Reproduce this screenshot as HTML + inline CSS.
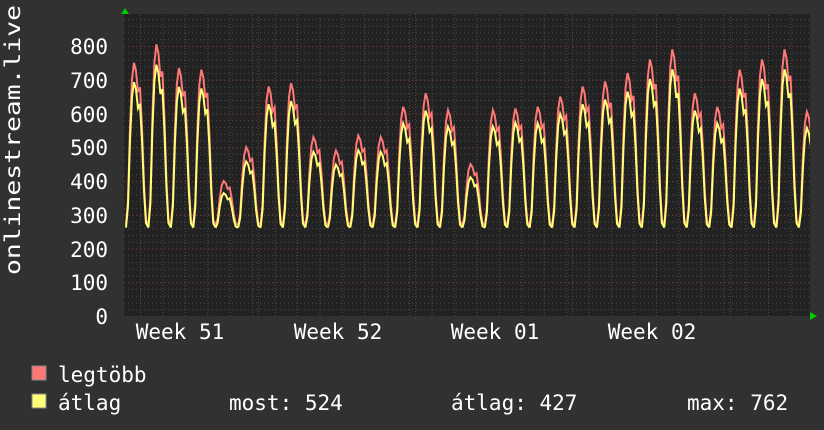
<!DOCTYPE html>
<html><head><meta charset="utf-8"><style>
html,body{margin:0;padding:0;background:#313131;width:824px;height:430px;overflow:hidden}
svg{display:block}
text{font-family:"DejaVu Sans Mono","Liberation Mono",monospace;fill:#fff}
</style></head><body>
<svg width="824" height="430" xmlns="http://www.w3.org/2000/svg">
<defs>
<pattern id="hm" patternUnits="userSpaceOnUse" x="0" y="316" width="4" height="6.75">
<rect x="0" y="0" width="1" height="1" fill="#4c4c4c"/></pattern>
<pattern id="hM" patternUnits="userSpaceOnUse" x="0" y="316" width="4" height="33.75">
<rect x="0" y="0" width="1.5" height="1" fill="#6a3a3a"/></pattern>
<pattern id="vm" patternUnits="userSpaceOnUse" x="140" y="0" width="22.43" height="3">
<rect x="0" y="0" width="1" height="1" fill="#4c4c4c"/></pattern>
<clipPath id="pc"><rect x="124" y="14" width="686" height="302"/></clipPath>
<path id="day" d="M0,0 L2,-0.15 L4,-0.6 L6,-0.9 L8,-1 L10,-0.95 L12,-0.82 L14,-0.85 L16,-0.6 L18,-0.25 L20,-0.03 L22.43,0" fill="none" vector-effect="non-scaling-stroke"/>
</defs>
<rect x="124" y="14" width="686" height="302" fill="#222"/>
<rect x="124" y="14" width="686" height="302" fill="url(#hm)"/>
<rect x="124" y="14" width="686" height="302" fill="url(#vm)"/>
<rect x="124" y="14" width="686" height="302" fill="url(#hM)"/>
<g stroke="#6a3a3a" stroke-dasharray="1,2">
<line x1="258.5" x2="258.5" y1="14" y2="320"/><line x1="415.5" x2="415.5" y1="14" y2="320"/>
<line x1="572.5" x2="572.5" y1="14" y2="320"/><line x1="730.5" x2="730.5" y1="14" y2="320"/>
</g>
<g clip-path="url(#pc)" stroke-width="2">
<g stroke="#f77">
<use href="#day" transform="translate(126,224.9) scale(1,162)"/>
<use href="#day" transform="translate(148.4,224.9) scale(1,180.6)"/>
<use href="#day" transform="translate(170.9,224.9) scale(1,156.9)"/>
<use href="#day" transform="translate(193.3,224.9) scale(1,155.3)"/>
<use href="#day" transform="translate(215.7,224.9) scale(1,43.9)"/>
<use href="#day" transform="translate(238.2,224.9) scale(1,77.6)"/>
<use href="#day" transform="translate(260.6,224.9) scale(1,138.4)"/>
<use href="#day" transform="translate(283,224.9) scale(1,141.8)"/>
<use href="#day" transform="translate(305.4,224.9) scale(1,87.8)"/>
<use href="#day" transform="translate(327.9,224.9) scale(1,74.3)"/>
<use href="#day" transform="translate(350.3,224.9) scale(1,89.4)"/>
<use href="#day" transform="translate(372.7,224.9) scale(1,87.8)"/>
<use href="#day" transform="translate(395.2,224.9) scale(1,118.1)"/>
<use href="#day" transform="translate(417.6,224.9) scale(1,131.6)"/>
<use href="#day" transform="translate(440,224.9) scale(1,114.8)"/>
<use href="#day" transform="translate(462.5,224.9) scale(1,60.8)"/>
<use href="#day" transform="translate(484.9,224.9) scale(1,114.8)"/>
<use href="#day" transform="translate(507.3,224.9) scale(1,116.4)"/>
<use href="#day" transform="translate(529.7,224.9) scale(1,118.1)"/>
<use href="#day" transform="translate(552.2,224.9) scale(1,128.3)"/>
<use href="#day" transform="translate(574.6,224.9) scale(1,138.4)"/>
<use href="#day" transform="translate(597,224.9) scale(1,143.4)"/>
<use href="#day" transform="translate(619.5,224.9) scale(1,151.9)"/>
<use href="#day" transform="translate(641.9,224.9) scale(1,165.4)"/>
<use href="#day" transform="translate(664.3,224.9) scale(1,175.5)"/>
<use href="#day" transform="translate(686.8,224.9) scale(1,131.6)"/>
<use href="#day" transform="translate(709.2,224.9) scale(1,118.1)"/>
<use href="#day" transform="translate(731.6,224.9) scale(1,155.3)"/>
<use href="#day" transform="translate(754,224.9) scale(1,165.4)"/>
<use href="#day" transform="translate(776.5,224.9) scale(1,175.5)"/>
<use href="#day" transform="translate(798.9,224.9) scale(1,113.1)"/>
</g>
<g stroke="#ff7">
<use href="#day" transform="translate(126,227.6) scale(1,145.5)"/>
<use href="#day" transform="translate(148.4,227.6) scale(1,162.9)"/>
<use href="#day" transform="translate(170.9,227.6) scale(1,140.7)"/>
<use href="#day" transform="translate(193.3,227.6) scale(1,139.1)"/>
<use href="#day" transform="translate(215.7,227.6) scale(1,34.4)"/>
<use href="#day" transform="translate(238.2,227.6) scale(1,66.2)"/>
<use href="#day" transform="translate(260.6,227.6) scale(1,123.3)"/>
<use href="#day" transform="translate(283,227.6) scale(1,126.4)"/>
<use href="#day" transform="translate(305.4,227.6) scale(1,75.7)"/>
<use href="#day" transform="translate(327.9,227.6) scale(1,63)"/>
<use href="#day" transform="translate(350.3,227.6) scale(1,77.3)"/>
<use href="#day" transform="translate(372.7,227.6) scale(1,75.7)"/>
<use href="#day" transform="translate(395.2,227.6) scale(1,104.2)"/>
<use href="#day" transform="translate(417.6,227.6) scale(1,116.9)"/>
<use href="#day" transform="translate(440,227.6) scale(1,101)"/>
<use href="#day" transform="translate(462.5,227.6) scale(1,50.3)"/>
<use href="#day" transform="translate(484.9,227.6) scale(1,101)"/>
<use href="#day" transform="translate(507.3,227.6) scale(1,105)"/>
<use href="#day" transform="translate(529.7,227.6) scale(1,104.2)"/>
<use href="#day" transform="translate(552.2,227.6) scale(1,113.7)"/>
<use href="#day" transform="translate(574.6,227.6) scale(1,123.3)"/>
<use href="#day" transform="translate(597,227.6) scale(1,128)"/>
<use href="#day" transform="translate(619.5,227.6) scale(1,135.9)"/>
<use href="#day" transform="translate(641.9,227.6) scale(1,148.6)"/>
<use href="#day" transform="translate(664.3,227.6) scale(1,158.2)"/>
<use href="#day" transform="translate(686.8,227.6) scale(1,116.9)"/>
<use href="#day" transform="translate(709.2,227.6) scale(1,104.2)"/>
<use href="#day" transform="translate(731.6,227.6) scale(1,139.1)"/>
<use href="#day" transform="translate(754,227.6) scale(1,148.6)"/>
<use href="#day" transform="translate(776.5,227.6) scale(1,158.2)"/>
<use href="#day" transform="translate(798.9,227.6) scale(1,99.5)"/>
</g>
</g>
<polygon points="121,14 129,14 125,8" fill="#0c0"/>
<polygon points="810,312 810,320 817,316" fill="#0c0"/>
<g font-size="21" text-anchor="end">
<text x="108" y="54">800</text><text x="108" y="88">700</text><text x="108" y="122">600</text>
<text x="108" y="155">500</text><text x="108" y="189">400</text><text x="108" y="223">300</text>
<text x="108" y="257">200</text><text x="108" y="290">100</text><text x="108" y="324">0</text>
</g>
<g font-size="21" text-anchor="middle">
<text x="180" y="339">Week 51</text><text x="338" y="339">Week 52</text>
<text x="495" y="339">Week 01</text><text x="652" y="339">Week 02</text>
</g>
<text font-size="21" transform="translate(20,275) rotate(-90)" textLength="270" lengthAdjust="spacingAndGlyphs">onlinestream.live</text>
<rect x="32" y="366" width="14" height="14" fill="#f77" stroke="#888" stroke-width="1"/>
<rect x="32" y="394" width="14" height="14" fill="#ff7" stroke="#888" stroke-width="1"/>
<g font-size="21">
<text x="58" y="382">legtöbb</text>
<text x="58" y="410">átlag</text>
<text x="229" y="410">most: 524</text>
<text x="451" y="410">átlag: 427</text>
<text x="687" y="410">max: 762</text>
</g>
</svg>
</body></html>
